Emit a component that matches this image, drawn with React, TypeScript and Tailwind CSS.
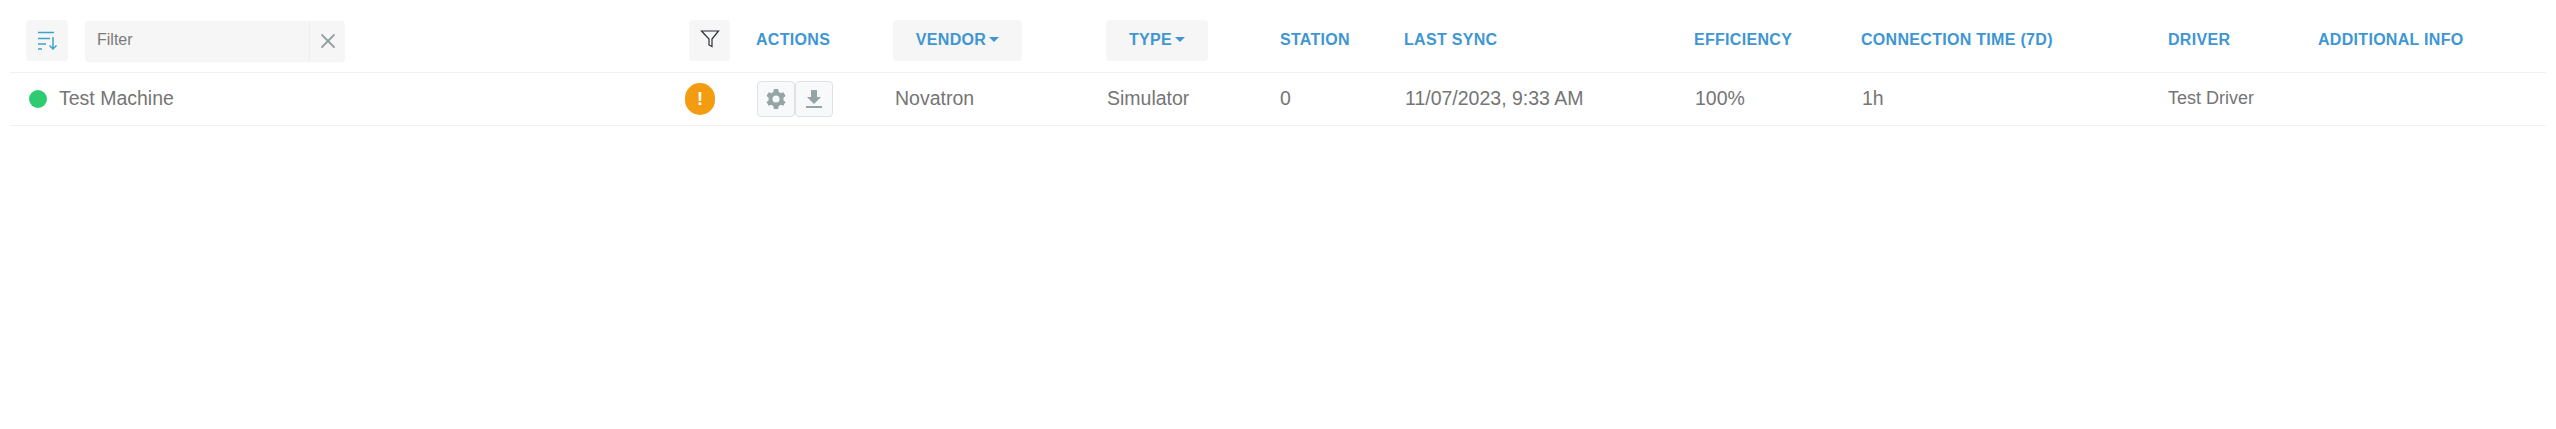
import { X } from 'lucide-react';

const rowGrid =
  'grid grid-cols-[670px_76px_137px_213px_174px_124px_290px_167px_307px_150px_1fr]';

function HeaderLabel({ children }: { children: React.ReactNode }) {
  return (
    <span className="-mt-[2px] text-[16px] font-bold tracking-[0.3px] text-[#4096d2] uppercase">{children}</span>
  );
}

function DropdownHeader({ label, width }: { label: string; width: string }) {
  return (
    <button className={`flex h-[41px] items-center justify-center gap-[3px] rounded bg-[#f6f6f6] ${width}`}>
      <HeaderLabel>{label}</HeaderLabel>
      <span className="-mt-[2px] h-0 w-0 border-x-[5px] border-t-[5px] border-x-transparent border-t-[#4096d2]" />
    </button>
  );
}

export default function App() {
  return (
    <div className="h-[429px] bg-white px-[10px] font-['Liberation_Sans',Arial,sans-serif] text-[#757575]">
      {/* Header */}
      <div className={`${rowGrid} h-[73px] items-start border-b border-[#f0f0f0] pt-[20px]`}>
        <div className="flex items-center pl-[16px]">
          <button className="flex h-[41px] w-[42px] items-center justify-center rounded bg-[#f6f6f6]">
            <svg width="21" height="20" viewBox="0 0 21 20" fill="none" stroke="#3ea2c9" strokeWidth="1.5">
              <path d="M1 1.500h16M1 7.500h12M1 13h8M1 18h4" />
              <path d="M16 6v12M12.500 14.500l3.500 3.500 3.500-3.500" />
            </svg>
          </button>
          <div className="ml-[17px] flex h-[40px] rounded bg-[#f6f6f6] shadow-[0_1px_1px_#f3f3f3]">
            <div className="flex w-[225px] items-center border-r border-[#eeeeee] pb-[2px] pl-[12px] text-[16px] text-[#7a7a7a]">
              Filter
            </div>
            <div className="flex w-[35px] items-center justify-center">
              <X size={24} strokeWidth={1.8} className="text-[#93a0a5]" />
            </div>
          </div>
        </div>
        <div className="pl-[9px]">
          <button className="flex h-[41px] w-[41px] items-center justify-center rounded bg-[#f6f6f6]">
            <svg width="20" height="20" viewBox="0 0 20 20" fill="none" stroke="#2b2f38" strokeWidth="1.2" className="-translate-y-[2px]">
              <path d="M1.500 2h17l-6.500 8v7.500l-3-1.500v-6z" />
            </svg>
          </button>
        </div>
        <div className="flex h-[41px] items-center">
          <HeaderLabel>Actions</HeaderLabel>
        </div>
        <DropdownHeader label="Vendor" width="w-[129px]" />
        <DropdownHeader label="Type" width="w-[102px]" />
        <div className="flex h-[41px] items-center">
          <HeaderLabel>Station</HeaderLabel>
        </div>
        <div className="flex h-[41px] items-center">
          <HeaderLabel>Last Sync</HeaderLabel>
        </div>
        <div className="flex h-[41px] items-center">
          <HeaderLabel>Efficiency</HeaderLabel>
        </div>
        <div className="flex h-[41px] items-center">
          <HeaderLabel>Connection Time (7D)</HeaderLabel>
        </div>
        <div className="flex h-[41px] items-center">
          <HeaderLabel>Driver</HeaderLabel>
        </div>
        <div className="flex h-[41px] items-center">
          <HeaderLabel>Additional Info</HeaderLabel>
        </div>
      </div>

      {/* Row */}
      <div className={`${rowGrid} h-[53px] items-center border-b border-[#f0f0f0] text-[19.500px]`}>
        <div className="flex items-center pl-[19px]">
          <span className="h-[18px] w-[18px] rounded-full bg-[#2ecc71]" />
          <span className="ml-[12px]">Test Machine</span>
        </div>
        <div className="pl-[5px]">
          <span className="flex h-[32px] w-[30px] items-center justify-center rounded-full bg-[#f39c12] text-[18px] font-bold text-white">
            !
          </span>
        </div>
        <div className="flex pl-[1px]">
          <button className="flex h-[36px] w-[38px] items-center justify-center rounded border border-[#dee2e6] bg-[#f8f9fa]">
            <svg width="24" height="24" viewBox="0 0 24 24" fill="#95a5a6">
              <path
                fillRule="evenodd"
                d="M19.400 13.300a7.500 7.500 0 0 0 0-2.600l2.200-1.600-2.200-3.800-2.500 1a7.500 7.500 0 0 0-2.200-1.300L14.200 2h-4.400l-.4 2.900a7.500 7.500 0 0 0-2.200 1.300l-2.500-1-2.200 3.800 2.200 1.700a7.500 7.500 0 0 0 0 2.600l-2.200 1.600 2.200 3.800 2.500-1a7.500 7.500 0 0 0 2.200 1.300l.4 2.900h4.400l.4-2.900a7.500 7.500 0 0 0 2.200-1.300l2.500 1 2.200-3.800zM12 15.500a3.500 3.500 0 1 1 0-7 3.500 3.500 0 0 1 0 7z"
              />
            </svg>
          </button>
          <button className="flex h-[36px] w-[38px] items-center justify-center rounded border border-[#dee2e6] bg-[#f8f9fa]">
            <svg width="20" height="20" viewBox="0 0 20 20" fill="#95a5a6">
              <path d="M7 1h6v7h4l-7 7-7-7h4zM2 17h16v2H2z" />
            </svg>
          </button>
        </div>
        <div className="pl-[2px]">Novatron</div>
        <div className="pl-[1px]">Simulator</div>
        <div>0</div>
        <div className="pl-[1px]">11/07/2023, 9:33 AM</div>
        <div className="pl-[1px]">100%</div>
        <div className="pl-[1px]">1h</div>
        <div className="pb-[2px] text-[18px]">Test Driver</div>
        <div />
      </div>
    </div>
  );
}
